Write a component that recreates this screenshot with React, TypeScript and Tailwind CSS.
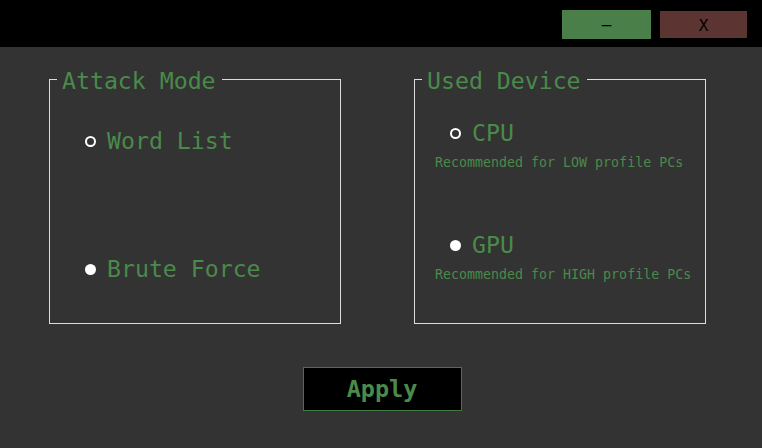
import React from "react";

const mono = { fontFamily: '"DejaVu Sans Mono", monospace' };

function Radio({ filled }: { filled?: boolean }) {
  return filled ? (
    <span className="inline-block w-[11px] h-[11px] rounded-full bg-white shrink-0" />
  ) : (
    <span className="inline-block w-[11px] h-[11px] rounded-full border-2 border-white shrink-0" />
  );
}

export default function App() {
  return (
    <div className="w-[762px] h-[448px] bg-[#333333] flex flex-col" style={mono}>
      <div className="h-[47px] bg-black flex items-start justify-end pr-[15px] gap-[9px]">
        <button className="mt-[10px] w-[89px] h-[29px] bg-[#4a7f4a] text-black text-[16px] leading-none flex items-center justify-center">
          –
        </button>
        <button className="mt-[11px] w-[87px] h-[27px] bg-[#5c3533] text-black text-[16px] leading-none flex items-center justify-center pt-[3px]">
          X
        </button>
      </div>

      <div className="flex pl-[49px] gap-[73px] mt-[18px]">
        <fieldset className="w-[292px] h-[259px] border border-[#dcdcdc] m-0 p-0">
          <legend className="ml-[7px] pl-[5px] pr-[6px] pt-[3px] text-[23.2px] leading-[26px] text-[#4a8a4a]">Attack Mode</legend>
          <div className="flex flex-col pl-[35px]">
            <div className="flex items-center gap-[11px] mt-[34px] h-[26px]">
              <Radio />
              <span className="text-[23.2px] text-[#4a8a4a] leading-[26px]">Word List</span>
            </div>
            <div className="flex items-center gap-[11px] mt-[102px] h-[26px]">
              <Radio filled />
              <span className="text-[23.2px] text-[#4a8a4a] leading-[26px]">Brute Force</span>
            </div>
          </div>
        </fieldset>

        <fieldset className="w-[292px] h-[259px] border border-[#dcdcdc] m-0 p-0">
          <legend className="ml-[7px] pl-[5px] pr-[6px] pt-[3px] text-[23.2px] leading-[26px] text-[#4a8a4a]">Used Device</legend>
          <div className="flex flex-col pl-[20px]">
            <div className="flex items-center gap-[11px] mt-[26px] h-[26px] pl-[15px]">
              <Radio />
              <span className="text-[23.2px] text-[#4a8a4a] leading-[26px]">CPU</span>
            </div>
            <div className="mt-[9px] text-[13.3px] leading-[16px] text-[#4a8a4a]">Recommended for LOW profile PCs</div>
            <div className="flex items-center gap-[11px] mt-[61px] h-[26px] pl-[15px]">
              <Radio filled />
              <span className="text-[23.2px] text-[#4a8a4a] leading-[26px]">GPU</span>
            </div>
            <div className="mt-[9px] text-[13.3px] leading-[16px] text-[#4a8a4a]">Recommended for HIGH profile PCs</div>
          </div>
        </fieldset>
      </div>

      <div className="flex justify-center mt-[43px]">
        <button className="w-[159px] h-[44px] bg-black border border-[#3f7a3f] text-[#4a8a4a] text-[23.5px] font-bold flex items-center justify-center ml-[2px] pt-[2px]">
          Apply
        </button>
      </div>
    </div>
  );
}
